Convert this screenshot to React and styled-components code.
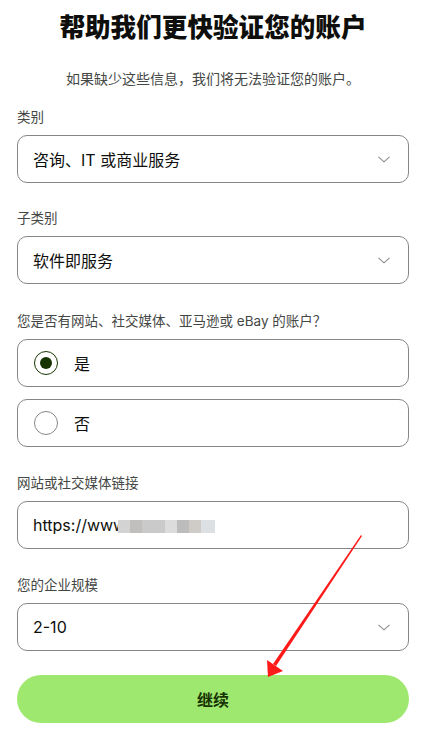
import React, { useState } from "react";
import styled, { createGlobalStyle } from "styled-components";

const GlobalStyle = createGlobalStyle`
  body {
    margin: 0;
    background: #fff;
    font-family: Inter, "Noto Sans CJK SC", sans-serif;
    color: #0e0f0c;
  }
`;

const Page = styled.div`
  position: relative;
  width: 392px;
  margin-left: 17px;
  padding-top: 10px;
  padding-bottom: 16px;
`;

const Title = styled.h1`
  margin: 0;
  font-size: 25.6px;
  line-height: 36px;
  font-weight: 800;
  text-align: center;
  color: #0e0f0c;
  letter-spacing: 0;
`;

const Subtitle = styled.p`
  margin: 23px 0 0;
  font-size: 14px;
  line-height: 20px;
  text-align: center;
  color: #454745;
`;

const Field = styled.div`
  margin-top: ${(p) => p.$top || 26}px;
`;

const Label = styled.div`
  font-size: 13.5px;
  line-height: 20px;
  color: #454745;
  margin-bottom: 8px;
`;

const Box = styled.div`
  box-sizing: border-box;
  height: 48px;
  border: 1px solid #868685;
  border-radius: 10px;
  display: flex;
  align-items: center;
  padding: 0 16px 0 15px;
  font-size: 16px;
  color: #0e0f0c;
  cursor: pointer;
`;

const Value = styled.span`
  flex: 1;
  white-space: nowrap;
`;

const Chevron = styled.svg`
  width: 12px;
  height: 7px;
  margin-right: 2px;
`;

const Options = styled.div`
  display: flex;
  flex-direction: column;
  gap: 12px;
`;

const RadioBox = styled(Box)`
  gap: 16px;
  padding-left: 16px;
`;

const Dot = styled.span`
  box-sizing: border-box;
  width: 24px;
  height: 24px;
  border-radius: 50%;
  border: 1px solid ${(p) => (p.$on ? "#163300" : "#868685")};
  display: flex;
  align-items: center;
  justify-content: center;
  &::after {
    content: "";
    width: 12px;
    height: 12px;
    border-radius: 50%;
    background: #163300;
    display: ${(p) => (p.$on ? "block" : "none")};
  }
`;

const Blur = styled.span`
  display: inline-block;
  width: 97px;
  height: 13px;
  margin-left: -8px;
  vertical-align: -2px;
  background: linear-gradient(
    90deg,
    #d3d3d3 0 12%,
    #c0bfbd 12% 25%,
    #cacaca 25% 48%,
    #dcdcdc 48% 61%,
    #bcbcbc 61% 73%,
    #cfcbc7 73% 86%,
    #dde0e3 86% 100%
  );
`;

const Button = styled.button`
  display: block;
  width: 100%;
  height: 48px;
  margin-top: 24px;
  border: none;
  border-radius: 24px;
  background: #9fe870;
  color: #163300;
  font-family: inherit;
  font-size: 16px;
  font-weight: 700;
  cursor: pointer;
`;

const Arrow = styled.svg`
  position: absolute;
  left: 0;
  top: 0;
  width: 448px;
  height: 739px;
  margin-left: -17px;
  pointer-events: none;
`;

function Select({ value }) {
  return (
    <Box>
      <Value>{value}</Value>
      <Chevron viewBox="0 0 12 7" fill="none">
        <path d="M0.5 0.8 L6 5.8 L11.5 0.8" stroke="#8a8a8a" strokeWidth="1.1" />
      </Chevron>
    </Box>
  );
}

export default function App() {
  const [hasSite, setHasSite] = useState(true);

  return (
    <>
      <GlobalStyle />
      <Page>
        <Title>帮助我们更快验证您的账户</Title>
        <Subtitle>如果缺少这些信息，我们将无法验证您的账户。</Subtitle>

        <Field $top={18}>
          <Label>类别</Label>
          <Select value="咨询、IT 或商业服务" />
        </Field>

        <Field $top={25}>
          <Label>子类别</Label>
          <Select value="软件即服务" />
        </Field>

        <Field $top={27}>
          <Label>您是否有网站、社交媒体、亚马逊或 eBay 的账户？</Label>
          <Options>
            <RadioBox onClick={() => setHasSite(true)}>
              <Dot $on={hasSite} />
              <Value>是</Value>
            </RadioBox>
            <RadioBox onClick={() => setHasSite(false)}>
              <Dot $on={!hasSite} />
              <Value>否</Value>
            </RadioBox>
          </Options>
        </Field>

        <Field $top={26}>
          <Label>网站或社交媒体链接</Label>
          <Box>
            <Value>
              https://www<Blur />
            </Value>
          </Box>
        </Field>

        <Field $top={26}>
          <Label>您的企业规模</Label>
          <Select value="2-10" />
        </Field>

        <Button>继续</Button>

        <Arrow viewBox="0 0 448 739">
          <path d="M361 535 L362 536 L276 666 L273 664 Z" fill="#ff1a1a" />
          <path d="M268 677 L267 660 L283 671 Z" fill="#ff1a1a" />
        </Arrow>
      </Page>
    </>
  );
}
